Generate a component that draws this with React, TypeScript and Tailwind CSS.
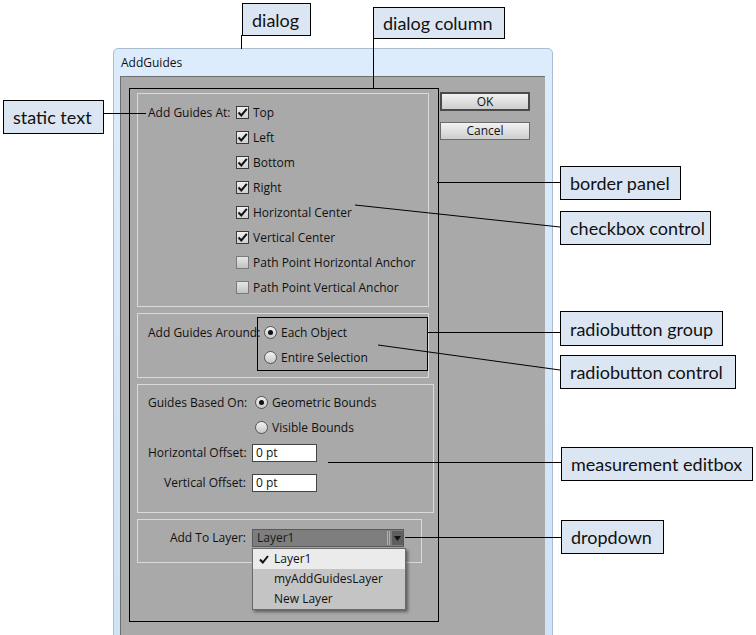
import React from "react";

const uiFont = { fontFamily: '"Open Sans", "Noto Sans", sans-serif' };
const calloutFont = { fontFamily: 'Lato, "Liberation Sans", sans-serif' };

function Check({ checked }: { checked: boolean }) {
  return (
    <span
      className={
        "inline-flex h-[13px] w-[13px] shrink-0 items-center justify-center border " +
        (checked
          ? "border-[#3a3a3a] bg-gradient-to-b from-[#f0f0f0] to-[#d0d0d0]"
          : "border-[#7a7a7a] bg-gradient-to-b from-[#e6e6e6] to-[#c2c2c2]")
      }
    >
      {checked && (
        <svg width="11" height="11" viewBox="0 0 11 11">
          <path d="M1.5 5.5 L4.3 8.5 L9.8 1.8" fill="none" stroke="#111" strokeWidth="2" />
        </svg>
      )}
    </span>
  );
}

function Radio({ on }: { on: boolean }) {
  return (
    <span className="inline-flex h-[13px] w-[13px] shrink-0 items-center justify-center rounded-full border border-[#555] bg-gradient-to-b from-[#f2f2f2] to-[#c8c8c8]">
      {on && <span className="h-[5px] w-[5px] rounded-full bg-[#111]" />}
    </span>
  );
}

function CheckRow({ label, checked }: { label: string; checked: boolean }) {
  return (
    <div className="flex h-[25px] items-center gap-[4px]">
      <Check checked={checked} />
      <span>{label}</span>
    </div>
  );
}

function RadioRow({ label, on }: { label: string; on: boolean }) {
  return (
    <div className="flex h-[25px] items-center gap-[4px]">
      <Radio on={on} />
      <span>{label}</span>
    </div>
  );
}

function Callout({
  text,
  left,
  top,
  width,
  height,
}: {
  text: string;
  left: number;
  top: number;
  width: number;
  height: number;
}) {
  return (
    <div
      className="absolute flex items-center border border-black bg-[#dce6f2] pl-[9px] text-[18px] leading-none text-[#111]"
      style={{ left, top, width, height, ...calloutFont }}
    >
      {text}
    </div>
  );
}

export default function App() {
  return (
    <div className="relative h-[635px] w-[756px] overflow-hidden bg-white">
      {/* dialog window */}
      <div
        className="absolute left-[113px] top-[48px] flex h-[600px] w-[440px] flex-col rounded-t-[5px] border border-[#a9bcd2] bg-gradient-to-b from-[#dcecfc] to-[#cfe3f6] pl-[6px] pr-[7px]"
        style={uiFont}
      >
        <div className="flex h-[27px] items-center pl-[1px] text-[12px] text-[#111]">AddGuides</div>
        <div className="flex h-[560px] border-l border-t border-[#6e6e6e] bg-[#a9a9a9] pl-[8px] pt-[11px] text-[12px] text-[#111]">
          {/* dialog column */}
          <div className="flex h-[534px] w-[310px] flex-col gap-[6px] border border-black pl-[7px] pt-[4px]">
            {/* panel 1 */}
            <div className="flex w-[292px] border border-[#dadada] pb-[6px] pl-[10px] pt-[6px]">
              <div className="flex h-[25px] w-[88px] items-center">Add Guides At:</div>
              <div className="flex flex-col">
                <CheckRow label="Top" checked />
                <CheckRow label="Left" checked />
                <CheckRow label="Bottom" checked />
                <CheckRow label="Right" checked />
                <CheckRow label="Horizontal Center" checked />
                <CheckRow label="Vertical Center" checked />
                <CheckRow label="Path Point Horizontal Anchor" checked={false} />
                <CheckRow label="Path Point Vertical Anchor" checked={false} />
              </div>
            </div>
            {/* panel 2 */}
            <div className="flex w-[292px] border border-[#dadada] pb-[6px] pl-[10px] pt-[3px]">
              <div className="mt-[3px] flex h-[25px] w-[109px] items-center whitespace-nowrap">Add Guides Around:</div>
              <div className="flex w-[171px] flex-col border border-black pl-[6px] pt-[2px]">
                <RadioRow label="Each Object" on />
                <RadioRow label="Entire Selection" on={false} />
              </div>
            </div>
            {/* panel 3 */}
            <div className="flex w-[297px] flex-col border border-[#dadada] pb-[17px] pl-[10px] pt-[5px]">
              <div className="flex h-[25px] items-center">
                <span className="w-[107px] whitespace-nowrap">Guides Based On:</span>
                <RadioRow label="Geometric Bounds" on />
              </div>
              <div className="flex h-[25px] items-center">
                <span className="w-[107px]" />
                <RadioRow label="Visible Bounds" on={false} />
              </div>
              <div className="flex h-[25px] items-center gap-[6px]">
                <span className="w-[98px] whitespace-nowrap text-right">Horizontal Offset:</span>
                <div className="flex h-[18px] w-[65px] items-center border border-[#444] bg-white pl-[3px]">0 pt</div>
              </div>
              <div className="mt-[5px] flex h-[25px] items-center gap-[6px]">
                <span className="w-[98px] whitespace-nowrap text-right">Vertical Offset:</span>
                <div className="flex h-[18px] w-[65px] items-center border border-[#444] bg-white pl-[3px]">0 pt</div>
              </div>
            </div>
            {/* panel 4 */}
            <div className="relative flex w-[285px] items-center gap-[6px] border border-[#dadada] pb-[15px] pl-[10px] pt-[9px]">
              <span className="w-[98px] whitespace-nowrap text-right">Add To Layer:</span>
              <div className="flex h-[18px] w-[152px] items-center border border-[#5a5a5a] bg-[#7e7e7e]">
                <span className="flex-1 pl-[4px] text-[#1a1a1a]">Layer1</span>
                <span className="mr-[2px] h-[14px] w-[3px] border-x border-[#b0b0b0]" />
                <span className="flex h-[14px] w-[11px] items-center justify-center bg-[#5f5f5f]">
                  <svg width="7" height="5" viewBox="0 0 7 5">
                    <path d="M0 0 H7 L3.5 5 Z" fill="#111" />
                  </svg>
                </span>
              </div>
              {/* open menu */}
              <div className="absolute left-[114px] top-[28px] z-10 flex w-[154px] flex-col border border-[#6a6a6a] bg-[#c4c4c4] shadow-[2px_2px_3px_rgba(0,0,0,0.45)]">
                <div className="flex h-[20px] items-center bg-[#ebebeb]">
                  <span className="flex w-[21px] justify-center">
                    <svg width="10" height="9" viewBox="0 0 10 9">
                      <path d="M1 4.5 L3.8 7.5 L9 1" fill="none" stroke="#111" strokeWidth="2" />
                    </svg>
                  </span>
                  <span>Layer1</span>
                </div>
                <div className="flex h-[20px] items-center pl-[21px]">myAddGuidesLayer</div>
                <div className="flex h-[20px] items-center pl-[21px]">New Layer</div>
              </div>
            </div>
          </div>
          {/* buttons */}
          <div className="ml-[1px] flex flex-col gap-[11px] pt-[4px]">
            <div className="flex h-[19px] w-[90px] items-center justify-center border-2 border-[#4a4a4a] bg-gradient-to-b from-[#f2f2f2] to-[#cdcdcd]">OK</div>
            <div className="flex h-[18px] w-[90px] items-center justify-center border border-[#6a6a6a] bg-gradient-to-b from-[#f2f2f2] to-[#cdcdcd]">Cancel</div>
          </div>
        </div>
      </div>

      {/* leader lines */}
      <svg className="pointer-events-none absolute left-0 top-0" width="756" height="635">
        <g stroke="#000" strokeWidth="1" shapeRendering="crispEdges">
          <line x1="241.5" y1="35" x2="241.5" y2="49" />
          <line x1="373.5" y1="38" x2="373.5" y2="89" />
          <line x1="103" y1="113.5" x2="146" y2="113.5" />
          <line x1="437" y1="182.5" x2="560" y2="182.5" />
          <line x1="428" y1="332.5" x2="560" y2="332.5" />
          <line x1="328" y1="462.5" x2="561" y2="462.5" />
          <line x1="405" y1="537.5" x2="561" y2="537.5" />
        </g>
        <g stroke="#000" strokeWidth="1">
          <line x1="355" y1="205" x2="560" y2="227" />
          <line x1="378" y1="345" x2="560" y2="370" />
        </g>
      </svg>

      {/* callouts */}
      <Callout text="dialog" left={242} top={3} width={69} height={33} />
      <Callout text="dialog column" left={373} top={7} width={132} height={32} />
      <Callout text="static text" left={3} top={100} width={101} height={34} />
      <Callout text="border panel" left={560} top={166} width={121} height={34} />
      <Callout text="checkbox control" left={560} top={211} width={151} height={34} />
      <Callout text="radiobutton group" left={560} top={311} width={163} height={35} />
      <Callout text="radiobutton control" left={560} top={355} width={176} height={34} />
      <Callout text="measurement editbox" left={561} top={447} width={192} height={34} />
      <Callout text="dropdown" left={561} top={520} width={103} height={34} />
    </div>
  );
}
